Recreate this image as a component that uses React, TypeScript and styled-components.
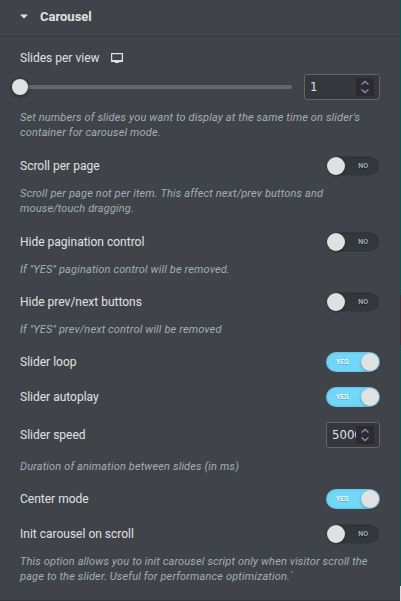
import React from "react";
import styled, { createGlobalStyle } from "styled-components";

const GlobalStyle = createGlobalStyle`
  * { box-sizing: border-box; }
  body { margin: 0; background: #404349; overflow: hidden; }
`;

const Panel = styled.main`
  width: 401px;
  height: 601px;
  display: grid;
  grid-template-columns: 400px 1px;
  background: #404349;
  color: #e0e1e3;
  font: 12px/20px Roboto, sans-serif;
`;

const Content = styled.section`
  height: 601px;
  border-bottom: 1px solid #34373c;
`;

const PageEdge = styled.div`
  background: linear-gradient(#0c594f 0 295px, #34373c 295px 345px, #0c594f 345px 586px, #dddddd 586px);
`;

const Header = styled.header`
  height: 37px;
  display: flex;
  align-items: center;
  gap: 12px;
  padding: 0 20px 3px;
  border-bottom: 1px solid #34373c;
`;

const Title = styled.h2`
  margin: 0;
  font-size: 13px;
  font-weight: 700;
`;

const Controls = styled.div`
  padding: 11px 20px 0;
`;

const Control = styled.div<{ $space?: number }>`
  margin-bottom: ${({ $space = 15 }) => $space}px;
`;

const Row = styled.div`
  display: flex;
  align-items: center;
  justify-content: space-between;
`;

const LabelRow = styled.div`
  display: flex;
  align-items: center;
  gap: 11px;
  height: 20px;
`;

const Label = styled.span`
  font-size: 12px;
  line-height: 20px;
`;

const Description = styled.p<{ $top?: number }>`
  margin: ${({ $top = 10 }) => $top}px 0 0;
  color: #a4afb7;
  font-size: 11px;
  font-style: italic;
  letter-spacing: 0.145px;
  line-height: 15px;
  white-space: pre;
`;

const SliderRow = styled(Row)`
  margin-top: 6px;
`;

const Track = styled.div`
  width: 272px;
  height: 4px;
  border-radius: 2px;
  background: #64666a;
  display: flex;
  align-items: center;
`;

const Thumb = styled.div`
  width: 16px;
  height: 16px;
  flex: none;
  margin-left: -8px;
  border-radius: 50%;
  background: #e0e1e3;
  box-shadow: 0 1px 4px rgba(0, 0, 0, 0.45);
`;

const NumberBox = styled.div<{ $width: number }>`
  width: ${({ $width }) => $width}px;
  height: 26px;
  display: flex;
  align-items: center;
  justify-content: space-between;
  padding: 0 5px;
  border: 1px solid #64666a;
  border-radius: 3px;
  background: #34373c;
`;

const NumberText = styled.span`
  flex: 1;
  min-width: 0;
  overflow: hidden;
  white-space: nowrap;
  font: 13px/20px "DejaVu Sans Condensed", "DejaVu Sans", sans-serif;
  font-stretch: condensed;
`;

const Spinner = styled.span`
  width: 18px;
  height: 18px;
  flex: none;
  background: #2b2a33;
  svg { display: block; }
`;

const Switch = styled.div<{ $on?: boolean }>`
  width: 54px;
  height: 20px;
  display: flex;
  flex-direction: ${({ $on }) => ($on ? "row" : "row-reverse")};
  align-items: center;
  justify-content: space-between;
  border-radius: 10px;
  padding: ${({ $on }) => ($on ? "0 1px 0 10px" : "0 12px 0 1px")};
  background: ${({ $on }) => ($on ? "#71d7f7" : "#34373c")};
  box-shadow: ${({ $on }) => $on
    ? "inset 0 0 3px rgba(0, 0, 0, 0.2)"
    : "inset 0 0 1px #777a7e, inset 0 1px 3px rgba(0, 0, 0, 0.2)"};
`;

const State = styled.span<{ $on?: boolean }>`
  color: ${({ $on }) => ($on ? "#ffffff" : "#b4bdc4")};
  font-size: 7px;
  font-weight: 500;
  line-height: 20px;
  text-shadow: 0 1px ${({ $on }) => ($on ? "rgba(0, 0, 0, 0.25)" : "#17191c")};
`;

const Knob = styled.span`
  width: 18px;
  height: 18px;
  border-radius: 50%;
  background: #e0e1e3;
  box-shadow: 0 1px 3px rgba(0, 0, 0, 0.3);
`;

function NumberInput({ value, width }: { value: number; width: number }) {
  return (
    <NumberBox $width={width}>
      <NumberText>{value}</NumberText>
      <Spinner>
        <svg width="18" height="18" viewBox="0 0 18 18" fill="none" stroke="#8f8d9b" strokeWidth="1.5">
          <path d="m5.5 6.5 3.5-3 3.5 3M5.5 11.5l3.5 3 3.5-3" />
        </svg>
      </Spinner>
    </NumberBox>
  );
}

function ToggleRow({ label, on }: { label: string; on?: boolean }) {
  return (
    <Row>
      <Label>{label}</Label>
      <Switch $on={on} role="switch" aria-checked={!!on}>
        <State $on={on}>{on ? "YES" : "NO"}</State>
        <Knob />
      </Switch>
    </Row>
  );
}

export default function App() {
  return (
    <>
      <GlobalStyle />
      <Panel>
        <Content>
          <Header>
            <svg width="8" height="5" viewBox="0 0 8 5"><path d="M0 .5h8L4 4.5z" fill="#e0e1e3" /></svg>
            <Title>Carousel</Title>
          </Header>
          <Controls>
            <Control $space={16}>
              <LabelRow>
                <Label>Slides per view</Label>
                <svg width="12" height="10" viewBox="0 0 12 10">
                  <path d="M.6.6h10.8v7.8H.6z" fill="none" stroke="#e0e1e3" strokeWidth="1.2" />
                  <path d="M1 7h10v2H1zM4 9h4v1H4z" fill="#e0e1e3" />
                </svg>
              </LabelRow>
              <SliderRow>
                <Track><Thumb /></Track>
                <NumberInput value={1} width={76} />
              </SliderRow>
              <Description>{"Set numbers of slides you want to display at the same time on slider's\ncontainer for carousel mode."}</Description>
            </Control>
            <Control $space={16}>
              <ToggleRow label="Scroll per page" />
              <Description>{"Scroll per page not per item. This affect next/prev buttons and\nmouse/touch dragging."}</Description>
            </Control>
            <Control>
              <ToggleRow label="Hide pagination control" />
              <Description>If "YES" pagination control will be removed.</Description>
            </Control>
            <Control>
              <ToggleRow label="Hide prev/next buttons" />
              <Description>If "YES" prev/next control will be removed</Description>
            </Control>
            <Control><ToggleRow label="Slider loop" on /></Control>
            <Control><ToggleRow label="Slider autoplay" on /></Control>
            <Control>
              <Row>
                <Label>Slider speed</Label>
                <NumberInput value={5000} width={54} />
              </Row>
              <Description $top={11}>Duration of animation between slides (in ms)</Description>
            </Control>
            <Control><ToggleRow label="Center mode" on /></Control>
            <Control>
              <ToggleRow label="Init carousel on scroll" />
              <Description>{"This option allows you to init carousel script only when visitor scroll the\npage to the slider. Useful for performance optimization.`"}</Description>
            </Control>
          </Controls>
        </Content>
        <PageEdge />
      </Panel>
    </>
  );
}
